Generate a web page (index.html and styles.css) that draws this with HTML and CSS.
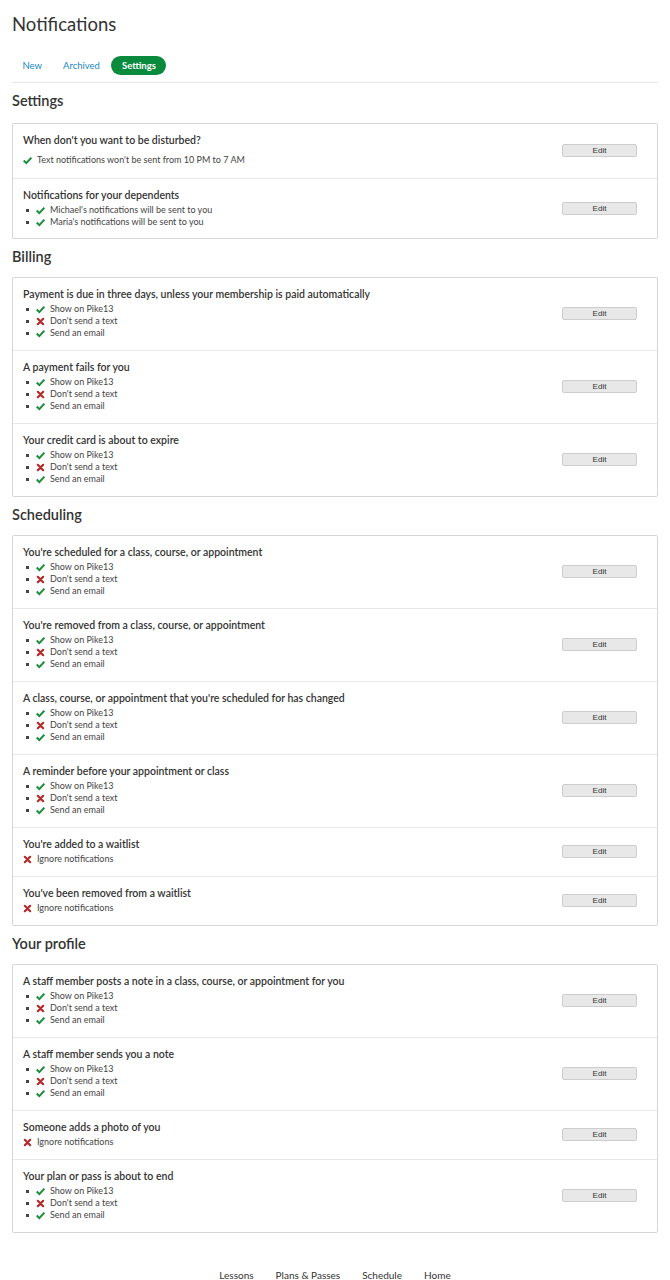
FILE: index.html
```html
<!DOCTYPE html>
<html lang="en">
<head>
<meta charset="utf-8">
<title>Notifications</title>
<link rel="stylesheet" href="styles.css">
</head>
<body>
<div class="page">
  <h1 class="title">Notifications</h1>
  <nav class="tabs">
    <a class="tab">New</a>
    <a class="tab">Archived</a>
    <a class="tab active">Settings</a>
  </nav>

  <h2 class="section first">Settings</h2>
  <div class="card">
    <div class="row">
      <div class="info">
        <div class="rtitle">When don't you want to be disturbed?</div>
        <div class="item plain lone"><span class="ok"></span>Text notifications won't be sent from 10 PM to 7 AM</div>
      </div>
      <button class="edit">Edit</button>
    </div>
    <div class="row compact">
      <div class="info">
        <div class="rtitle">Notifications for your dependents</div>
        <div class="item"><span class="dot"></span><span class="ok"></span>Michael's notifications will be sent to you</div>
        <div class="item"><span class="dot"></span><span class="ok"></span>Maria's notifications will be sent to you</div>
      </div>
      <button class="edit">Edit</button>
    </div>
  </div>

  <h2 class="section">Billing</h2>
  <div class="card">
    <div class="row">
      <div class="info">
        <div class="rtitle">Payment is due in three days, unless your membership is paid automatically</div>
        <div class="item"><span class="dot"></span><span class="ok"></span>Show on Pike13</div>
        <div class="item"><span class="dot"></span><span class="no"></span>Don't send a text</div>
        <div class="item"><span class="dot"></span><span class="ok"></span>Send an email</div>
      </div>
      <button class="edit">Edit</button>
    </div>
    <div class="row">
      <div class="info">
        <div class="rtitle">A payment fails for you</div>
        <div class="item"><span class="dot"></span><span class="ok"></span>Show on Pike13</div>
        <div class="item"><span class="dot"></span><span class="no"></span>Don't send a text</div>
        <div class="item"><span class="dot"></span><span class="ok"></span>Send an email</div>
      </div>
      <button class="edit">Edit</button>
    </div>
    <div class="row">
      <div class="info">
        <div class="rtitle">Your credit card is about to expire</div>
        <div class="item"><span class="dot"></span><span class="ok"></span>Show on Pike13</div>
        <div class="item"><span class="dot"></span><span class="no"></span>Don't send a text</div>
        <div class="item"><span class="dot"></span><span class="ok"></span>Send an email</div>
      </div>
      <button class="edit">Edit</button>
    </div>
  </div>

  <h2 class="section">Scheduling</h2>
  <div class="card">
    <div class="row">
      <div class="info">
        <div class="rtitle">You're scheduled for a class, course, or appointment</div>
        <div class="item"><span class="dot"></span><span class="ok"></span>Show on Pike13</div>
        <div class="item"><span class="dot"></span><span class="no"></span>Don't send a text</div>
        <div class="item"><span class="dot"></span><span class="ok"></span>Send an email</div>
      </div>
      <button class="edit">Edit</button>
    </div>
    <div class="row">
      <div class="info">
        <div class="rtitle">You're removed from a class, course, or appointment</div>
        <div class="item"><span class="dot"></span><span class="ok"></span>Show on Pike13</div>
        <div class="item"><span class="dot"></span><span class="no"></span>Don't send a text</div>
        <div class="item"><span class="dot"></span><span class="ok"></span>Send an email</div>
      </div>
      <button class="edit">Edit</button>
    </div>
    <div class="row">
      <div class="info">
        <div class="rtitle">A class, course, or appointment that you're scheduled for has changed</div>
        <div class="item"><span class="dot"></span><span class="ok"></span>Show on Pike13</div>
        <div class="item"><span class="dot"></span><span class="no"></span>Don't send a text</div>
        <div class="item"><span class="dot"></span><span class="ok"></span>Send an email</div>
      </div>
      <button class="edit">Edit</button>
    </div>
    <div class="row">
      <div class="info">
        <div class="rtitle">A reminder before your appointment or class</div>
        <div class="item"><span class="dot"></span><span class="ok"></span>Show on Pike13</div>
        <div class="item"><span class="dot"></span><span class="no"></span>Don't send a text</div>
        <div class="item"><span class="dot"></span><span class="ok"></span>Send an email</div>
      </div>
      <button class="edit">Edit</button>
    </div>
    <div class="row">
      <div class="info">
        <div class="rtitle">You're added to a waitlist</div>
        <div class="item plain"><span class="no"></span>Ignore notifications</div>
      </div>
      <button class="edit">Edit</button>
    </div>
    <div class="row">
      <div class="info">
        <div class="rtitle">You've been removed from a waitlist</div>
        <div class="item plain"><span class="no"></span>Ignore notifications</div>
      </div>
      <button class="edit">Edit</button>
    </div>
  </div>

  <h2 class="section">Your profile</h2>
  <div class="card">
    <div class="row">
      <div class="info">
        <div class="rtitle">A staff member posts a note in a class, course, or appointment for you</div>
        <div class="item"><span class="dot"></span><span class="ok"></span>Show on Pike13</div>
        <div class="item"><span class="dot"></span><span class="no"></span>Don't send a text</div>
        <div class="item"><span class="dot"></span><span class="ok"></span>Send an email</div>
      </div>
      <button class="edit">Edit</button>
    </div>
    <div class="row">
      <div class="info">
        <div class="rtitle">A staff member sends you a note</div>
        <div class="item"><span class="dot"></span><span class="ok"></span>Show on Pike13</div>
        <div class="item"><span class="dot"></span><span class="no"></span>Don't send a text</div>
        <div class="item"><span class="dot"></span><span class="ok"></span>Send an email</div>
      </div>
      <button class="edit">Edit</button>
    </div>
    <div class="row">
      <div class="info">
        <div class="rtitle">Someone adds a photo of you</div>
        <div class="item plain"><span class="no"></span>Ignore notifications</div>
      </div>
      <button class="edit">Edit</button>
    </div>
    <div class="row">
      <div class="info">
        <div class="rtitle">Your plan or pass is about to end</div>
        <div class="item"><span class="dot"></span><span class="ok"></span>Show on Pike13</div>
        <div class="item"><span class="dot"></span><span class="no"></span>Don't send a text</div>
        <div class="item"><span class="dot"></span><span class="ok"></span>Send an email</div>
      </div>
      <button class="edit">Edit</button>
    </div>
  </div>

  <footer class="footer">
    <a>Lessons</a>
    <a>Plans &amp; Passes</a>
    <a>Schedule</a>
    <a>Home</a>
  </footer>
</div>
</body>
</html>
```

FILE: styles.css
```css
* { box-sizing: border-box; }
html, body { margin: 0; padding: 0; background: #fff; }
body {
  font-family: Lato, "Liberation Sans", sans-serif;
  color: #333;
}
.page { padding: 0 12px; }

.title {
  margin: 0;
  padding-top: 12px;
  font-size: 18.5px;
  line-height: 24px;
  font-weight: 400;
  color: #333;
}

.tabs {
  display: flex;
  align-items: center;
  margin-top: 20px;
  padding-bottom: 7px;
  border-bottom: 1px solid #e6e6e6;
}
.tab {
  display: block;
  height: 19px;
  line-height: 19px;
  padding: 0 10.5px;
  border-radius: 10px;
  font-size: 9.5px;
  color: #1b87c0;
}
.tab.active {
  background: #0a8a3c;
  color: #fff;
  font-weight: 700;
  margin-left: 1px;
}

.section {
  margin: 9px 0 11px;
  font-size: 14.5px;
  line-height: 18px;
  font-weight: 600;
  color: #333;
}
.section.first { margin-top: 9px; margin-bottom: 13px; }

.card {
  border: 1px solid #d6d6d6;
  border-radius: 2px;
}
.row {
  display: flex;
  align-items: center;
  justify-content: space-between;
  padding: 9px 20px 11px 10px;
  border-top: 1px solid #e8e8e8;
}
.row:first-child { border-top: 0; }
.row.compact { padding-bottom: 10px; }
.rtitle {
  font-size: 10.5px;
  line-height: 14px;
  font-weight: 600;
  color: #333;
  margin-bottom: 2px;
}
.item {
  display: flex;
  align-items: center;
  font-size: 9px;
  line-height: 12px;
  color: #444;
}
.item.lone { margin-top: 7px; margin-bottom: 1px; }
.dot {
  width: 3px;
  height: 3px;
  background: #444;
  margin: 0 7px 0 3px;
  flex: none;
}
.ok, .no {
  width: 9px;
  height: 9px;
  margin-right: 5px;
  flex: none;
  background-repeat: no-repeat;
  background-position: center;
}
.ok {
  background-image: url("data:image/svg+xml;utf8,<svg xmlns='http://www.w3.org/2000/svg' viewBox='0 0 10 10'><path d='M0.8 5 L3.7 7.9 L9.3 1.9' fill='none' stroke='%231c8d3c' stroke-width='2.3' stroke-linecap='butt' stroke-linejoin='miter'/></svg>");
}
.no {
  background-image: url("data:image/svg+xml;utf8,<svg xmlns='http://www.w3.org/2000/svg' viewBox='0 0 10 10'><path d='M2 2 L8 8 M8 2 L2 8' fill='none' stroke='%23b42a2a' stroke-width='2.4' stroke-linecap='round'/></svg>");
}

.edit {
  width: 75px;
  height: 13px;
  padding: 0;
  border: 1px solid #cdcdcd;
  border-radius: 2px;
  background: #e8e8e8;
  font-family: "Liberation Sans", Arial, sans-serif;
  font-size: 8px;
  line-height: 11px;
  color: #333;
  flex: none;
}

.footer {
  display: flex;
  justify-content: center;
  gap: 22px;
  padding-top: 36px;
  font-size: 10px;
  line-height: 12px;
  color: #333;
}
```
